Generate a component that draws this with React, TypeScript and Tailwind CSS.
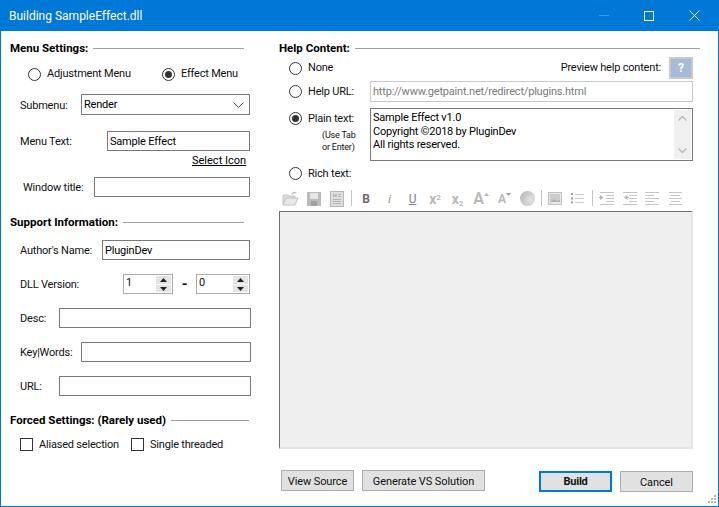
const uiFont = 'font-["Roboto",sans-serif]';
// labels sit a pixel lower than the browser centres them
const lbl = "pt-[2px]";

function Heading({ title, lineClass }: { title: string; lineClass: string }) {
  return (
    <div className="flex h-[14px] items-center tracking-normal">
      <span className="text-[11.5px] leading-[14px] font-bold whitespace-nowrap text-black">{title}</span>
      <div className={`ml-[5px] h-px bg-[#a0a0a0] ${lineClass}`} />
    </div>
  );
}

function Radio({ checked, label, flat }: { checked?: boolean; label?: string; flat?: boolean }) {
  return (
    <div className="flex items-center">
      <span className="flex h-[13px] w-[13px] shrink-0 items-center justify-center rounded-full border border-[#333] bg-white">
        {checked && <span className="h-[7px] w-[7px] rounded-full bg-[#333]" />}
      </span>
      {label && <span className={`ml-[6px] whitespace-nowrap ${flat ? "" : lbl}`}>{label}</span>}
    </div>
  );
}

function Checkbox({ label }: { label: string }) {
  return (
    <div className="flex items-center">
      <span className="h-[13px] w-[13px] shrink-0 border border-[#333] bg-white" />
      <span className={`ml-[6px] whitespace-nowrap ${lbl}`}>{label}</span>
    </div>
  );
}

function TextBox({ value, className }: { value?: string; className: string }) {
  return (
    <input
      readOnly
      defaultValue={value}
      className={`h-[20px] border border-[#7a7a7a] bg-white px-[2px] text-[11px] tracking-[-0.2px] text-black outline-none ${className}`}
    />
  );
}

function Spinner({ value, className }: { value: string; className: string }) {
  return (
    <div className={`flex h-[20px] items-center justify-between border border-[#acacac] bg-white pl-[2px] pr-px ${className}`}>
      <span className="-mt-[3px]">{value}</span>
      <div className="flex h-[16px] w-[15px] flex-col gap-px">
        <span className="flex h-[8px] items-center justify-center bg-[#e4e4e4] text-[#222]">
          <svg width="7" height="4" viewBox="0 0 7 4"><path d="M3.5 0 7 4H0z" fill="currentColor" /></svg>
        </span>
        <span className="flex h-[7px] items-center justify-center bg-[#e4e4e4] text-[#222]">
          <svg width="7" height="4" viewBox="0 0 7 4"><path d="M0 0h7L3.5 4z" fill="currentColor" /></svg>
        </span>
      </div>
    </div>
  );
}

function Btn({ label, className }: { label: string; className: string }) {
  return (
    <button className={`flex h-[21px] items-center justify-center border border-[#adadad] bg-[#e1e1e1] pt-[2px] text-[11px] tracking-[-0.1px] ${className}`}>
      {label}
    </button>
  );
}

function Slot({ w = 23, children }: { w?: number; children: React.ReactNode }) {
  return (
    <div className="flex h-[17px] shrink-0 items-center justify-center" style={{ width: w }}>
      {children}
    </div>
  );
}

function Sep({ w = 7 }: { w?: number }) {
  return (
    <div className="flex h-[17px] shrink-0 justify-center" style={{ width: w }}>
      <div className="h-[16px] w-px bg-[#c4c4c4]" />
    </div>
  );
}

// greyed out toolbar drawings
function IndentIcon({ flip }: { flip?: boolean }) {
  return (
    <svg width="15" height="13" viewBox="0 0 15 13" stroke="#c6c6c6" fill="none">
      <path d="M1 .5h14M7 3.500h8M7 6.500h8M7 9.500h8M1 12.500h14" />
      <path d={flip ? "M5.500 3 2 5.500 5.500 8z" : "M1 3l3.500 2.500L1 8z"} fill="#b4b4b4" stroke="none" />
      <path d={flip ? "M5 5.500h2" : "M0 5.500h1"} stroke="#b4b4b4" />
    </svg>
  );
}

function AlignIcon({ center }: { center?: boolean }) {
  return (
    <svg width="15" height="13" viewBox="0 0 15 13" stroke="#c6c6c6" fill="none">
      {center ? (
        <path d="M1 .5h13M3 3.500h9M1 6.500h13M3 9.500h9M1 12.500h13" />
      ) : (
        <path d="M0 .5h14M0 3.500h9M0 6.500h14M0 9.500h9M0 12.500h14" />
      )}
    </svg>
  );
}

function Toolbar() {
  const glyph = "font-bold text-[#b8b8b8]";
  return (
    <div className="flex h-[17px] items-center">
      <Slot>
        <svg width="17" height="16" viewBox="0 0 17 16">
          <path d="M1 4h5l1 1h6v2H4L1 14z" fill="#dedede" stroke="#c4c4c4" />
          <path d="M4 7h12l-3 7H1z" fill="#e8e8e8" stroke="#c4c4c4" />
          <path d="M10 3.500c1-2 3-2.500 4-1.500" fill="none" stroke="#bbb" strokeWidth="1.500" />
        </svg>
      </Slot>
      <Slot>
        <svg width="14" height="14" viewBox="0 0 14 14">
          <rect width="14" height="14" fill="#bcbcbc" />
          <rect x="3" y="1" width="8" height="6" fill="#e6e6e6" />
          <rect x="4" y="9" width="6" height="5" fill="#a0a0a0" />
        </svg>
      </Slot>
      <Slot>
        <svg width="14" height="16" viewBox="0 0 14 16">
          <rect x=".5" y=".5" width="13" height="15" fill="#dedede" stroke="#b8b8b8" />
          <rect x="3" y="3" width="4" height="3" fill="#c0c0c0" />
          <path d="M8 3.500h3M8 5.500h3M3 8.500h8M3 10.500h8M3 12.500h8" stroke="#b4b4b4" />
        </svg>
      </Slot>
      <Sep w={6} />
      <Slot w={24}><span className="text-[12px] leading-none font-bold text-[#6a6a70]">B</span></Slot>
      <Slot><span className="font-['Liberation_Serif',serif] text-[13px] leading-none text-[#a89878] italic">i</span></Slot>
      <Slot><span className="text-[12px] leading-none text-[#808088] underline">U</span></Slot>
      <Slot w={22}><span className={`${glyph} text-[14px] leading-none`}>x<sup className="text-[8px]">2</sup></span></Slot>
      <Slot><span className={`${glyph} text-[14px] leading-none`}>x<sub className="text-[8px]">2</sub></span></Slot>
      <Slot w={24}>
        <span className={`${glyph} text-[16px] leading-none`}>A</span>
        <svg width="5" height="3" viewBox="0 0 5 3" className="mb-[9px]"><path d="M2.5 0 5 3H0z" fill="#b2b2b2" /></svg>
      </Slot>
      <Slot>
        <span className={`${glyph} text-[12px] leading-none`}>A</span>
        <svg width="5" height="3" viewBox="0 0 5 3" className="mb-[9px]"><path d="M0 0h5L2.5 3z" fill="#a0a0a0" /></svg>
      </Slot>
      <Slot w={22}>
        <span className="h-[15px] w-[15px] rounded-full bg-[radial-gradient(circle_at_70%_60%,#e4e4e4,#b0b0b0)]" />
      </Slot>
      <Sep w={6} />
      <Slot w={21}>
        <svg width="14" height="13" viewBox="0 0 14 13">
          <rect x=".5" y=".5" width="13" height="12" fill="#e8e8e8" stroke="#c0c0c0" />
          <rect x="2" y="2" width="10" height="8" fill="#cccccc" />
          <path d="M2 10l4-3 3 2 3-1v2z" fill="#b0b0b0" />
        </svg>
      </Slot>
      <Slot w={24}>
        <svg width="14" height="13" viewBox="0 0 14 13">
          <path d="M5 2.500h9M5 6.500h9M5 10.500h9" stroke="#cccccc" />
          <path d="M1 1h2v2H1zM1 5.500h2v2H1zM1 9.500h2v2H1z" fill="#a4a4a4" />
        </svg>
      </Slot>
      <Sep w={6} />
      <Slot w={23}><IndentIcon /></Slot>
      <Slot><IndentIcon flip /></Slot>
      <Slot><AlignIcon /></Slot>
      <Slot><AlignIcon center /></Slot>
    </div>
  );
}

export default function App() {
  return (
    <div className={`relative flex h-[507px] w-[719px] flex-col overflow-hidden border border-t-0 border-[#0078d7] bg-white text-[11px] leading-[14px] tracking-[-0.2px] text-[#111] ${uiFont}`}>
      <header className="flex h-[31px] shrink-0 items-center bg-[#0078d7] pl-[8px] tracking-normal text-white">
        <span className="text-[12px]">Building SampleEffect.dll</span>
        <div className="ml-auto mr-[18px] flex items-center gap-[35px]">
          <div className="h-px w-[10px] bg-[#3d9ae2]" />
          <div className="h-[10px] w-[10px] border border-white" />
          <svg width="11" height="11" viewBox="0 0 11 11" stroke="white"><path d="M.5.5l10 10M10.500.5l-10 10" /></svg>
        </div>
      </header>

      <div className="flex min-h-0 flex-1">
        {/* left column */}
        <div className="flex w-[278px] shrink-0 flex-col pl-[9px] pt-[10px]">
          <Heading title="Menu Settings:" lineClass="w-[151px]" />
          <div className="mt-[12px] ml-[18px] flex h-[14px] items-center">
            <div className="w-[134px]"><Radio flat label="Adjustment Menu" /></div>
            <Radio flat checked label="Effect Menu" />
          </div>
          <div className="mt-[13px] ml-[10px] flex h-[21px] items-center">
            <span className={`w-[61px] ${lbl}`}>Submenu:</span>
            <div className="flex h-[21px] w-[169px] items-center justify-between border border-[#7a7a7a] pl-[2px] pr-[5px] text-black">
              <span>Render</span>
              <svg width="11" height="6" viewBox="0 0 11 6" fill="none" stroke="#444"><path d="M.5.5l5 5 5-5" /></svg>
            </div>
          </div>
          <div className="mt-[16px] ml-[10px] flex h-[20px] items-center">
            <span className={`w-[87px] ${lbl}`}>Menu Text:</span>
            <TextBox value="Sample Effect" className="w-[143px]" />
          </div>
          <div className="mt-[3px] ml-[182px] h-[14px] whitespace-nowrap tracking-normal text-black underline">Select Icon</div>
          <div className="mt-[9px] ml-[13px] flex h-[20px] items-center">
            <span className={`w-[71px] ${lbl}`}>Window title:</span>
            <TextBox className="w-[156px]" />
          </div>

          <div className="mt-[18px]">
            <Heading title="Support Information:" lineClass="w-[121px]" />
          </div>
          <div className="mt-[11px] ml-[10px] flex h-[20px] items-center">
            <span className={`w-[82px] ${lbl}`}>Author's Name:</span>
            <TextBox value="PluginDev" className="w-[148px]" />
          </div>
          <div className="mt-[14px] ml-[10px] flex h-[20px] items-center">
            <span className={`w-[103px] ${lbl}`}>DLL Version:</span>
            <Spinner value="1" className="w-[50px]" />
            <span className="w-[23px] text-center text-[15px] font-bold">-</span>
            <Spinner value="0" className="w-[54px]" />
          </div>
          <div className="mt-[14px] ml-[10px] flex h-[20px] items-center">
            <span className={`w-[39px] ${lbl}`}>Desc:</span>
            <TextBox className="w-[192px]" />
          </div>
          <div className="mt-[14px] ml-[10px] flex h-[20px] items-center">
            <span className={`w-[61px] ${lbl}`}>Key|Words:</span>
            <TextBox className="w-[170px]" />
          </div>
          <div className="mt-[14px] ml-[10px] flex h-[20px] items-center">
            <span className={`w-[39px] ${lbl}`}>URL:</span>
            <TextBox className="w-[192px]" />
          </div>

          <div className="mt-[17px]">
            <Heading title="Forced Settings: (Rarely used)" lineClass="w-[78px]" />
          </div>
          <div className="mt-[10px] ml-[10px] flex h-[14px] items-center">
            <div className="w-[111px]"><Checkbox label="Aliased selection" /></div>
            <Checkbox label="Single threaded" />
          </div>
        </div>

        {/* right column */}
        <div className="flex w-[421px] shrink-0 flex-col pt-[10px]">
          <Heading title="Help Content:" lineClass="w-[345px]" />
          <div className="flex h-[26px] items-center justify-between pl-[10px]">
            <Radio flat label="None" />
            <div className="flex items-center pr-[7px]">
              <span>Preview help content:</span>
              <div className="ml-[8px] flex h-[22px] w-[24px] items-center justify-center border-2 border-[#c8c8c8] bg-white">
                <span className="flex h-[18px] w-[20px] items-center justify-center bg-[#a4bcd8] text-[12px] font-bold text-white">?</span>
              </div>
            </div>
          </div>
          <div className="flex h-[21px] items-center pl-[10px]">
            <div className="w-[81px]"><Radio flat label="Help URL:" /></div>
            <div className="flex h-[21px] w-[323px] items-center border border-[#c8c8c8] px-[2px] text-[#7a7a7a]">
              http://www.getpaint.net/redirect/plugins.html
            </div>
          </div>
          <div className="mt-[6px] flex h-[53px] pl-[10px]">
            <div className="w-[81px] pt-[2px]">
              <Radio checked label="Plain text:" />
              <div className="ml-[33px] mt-[3px] whitespace-nowrap text-[9px] leading-[12px]">(Use Tab<br />or Enter)</div>
            </div>
            <div className="flex h-[53px] w-[323px] justify-between border border-[#7a7a7a] pt-[2px] pb-px pl-[2px] pr-px leading-[13.5px] text-black">
              <div>Sample Effect v1.0<br />Copyright ©2018 by PluginDev<br />All rights reserved.</div>
              <div className="-mt-px flex w-[17px] flex-col items-center justify-between bg-[#f0f0f0] py-[6px]">
                <svg width="9" height="5" viewBox="0 0 9 5" fill="none" stroke="#bdbdbd" strokeWidth="1.500"><path d="M.5 4.500l4-4 4 4" /></svg>
                <svg width="9" height="5" viewBox="0 0 9 5" fill="none" stroke="#bdbdbd" strokeWidth="1.500"><path d="M.5.5l4 4 4-4" /></svg>
              </div>
            </div>
          </div>
          <div className="mt-[5px] flex h-[14px] items-center pl-[10px]">
            <Radio label="Rich text:" />
          </div>
          <div className="mt-[10px]">
            <Toolbar />
          </div>
          <div className="mt-[4px] h-[238px] w-[414px] border border-b-2 border-r-2 border-[#e6e6e6] border-t-[#6e6e6e] border-l-[#6e6e6e] bg-[#efefef]" />
          <div className="mt-[21px] flex pl-[2px]">
            <Btn label="View Source" className="w-[73px]" />
            <Btn label="Generate VS Solution" className="ml-[8px] w-[123px]" />
            <button className="ml-[54px] mt-px flex h-[21px] w-[73px] items-center justify-center border-2 border-[#0078d7] bg-[#e1e1e1] pt-px text-[11px] font-bold">Build</button>
            <Btn label="Cancel" className="ml-[8px] mt-px w-[73px]" />
          </div>
        </div>
      </div>

      <svg className="absolute right-[2px] bottom-[2px]" width="9" height="9" viewBox="0 0 9 9" fill="#b8b8b8">
        <path d="M7 0h2v2H7zM4 3h2v2H4zM7 3h2v2H7zM1 6h2v2H1zM4 6h2v2H4zM7 6h2v2H7z" />
      </svg>
    </div>
  );
}
